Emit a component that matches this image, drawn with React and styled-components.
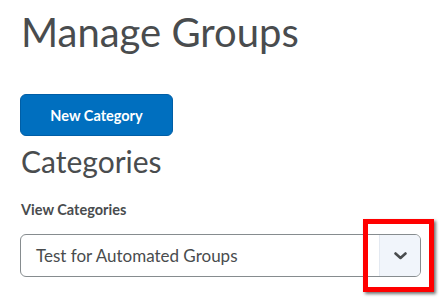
import React from 'react';
import styled, {createGlobalStyle} from 'styled-components';

const GlobalStyle = createGlobalStyle`
    html, body {
        margin: 0;
        padding: 0;
        background: #ffffff;
        font-family: Lato, "Noto Sans", sans-serif;
        color: #494c4e;
    }
`;

const Page = styled.main`
    min-height: 299px;
    box-sizing: border-box;
    padding: 8px 18px 0 20px;
    display: flex;
    flex-direction: column;
    align-items: flex-start;
`;

const Title = styled.h1`
    margin: 0;
    font-size: 40px;
    font-weight: 400;
    line-height: 48px;
    color: #494c4e;
    padding-left: 1px;
`;

const PrimaryButton = styled.button`
    margin-top: 38px;
    width: 153px;
    height: 42px;
    border: 1px solid #005ea6;
    border-radius: 6px;
    background: #006fbf;
    color: #ffffff;
    font-family: Lato, sans-serif;
    font-weight: 700;
    font-size: 14.5px;
    cursor: pointer;
`;

const SectionTitle = styled.h2`
    margin: 6px 0 0;
    font-size: 30px;
    font-weight: 400;
    line-height: 38px;
    color: #494c4e;
    padding-left: 1px;
`;

const Label = styled.label`
    margin-top: 20px;
    font-size: 14.5px;
    font-weight: 700;
    line-height: 19px;
    padding-left: 1px;
`;

const SelectWrap = styled.div`
    position: relative;
    margin-top: 15px;
    align-self: stretch;
`;

const Select = styled.div`
    display: flex;
    height: 43px;
    box-sizing: border-box;
    border: 1px solid #868c8f;
    border-radius: 6px;
    overflow: hidden;
`;

const SelectValue = styled.span`
    flex: 1;
    display: flex;
    align-items: center;
    padding-left: 15px;
    font-size: 17px;
    color: #494c4e;
`;

const SelectToggle = styled.span`
    width: 40px;
    display: flex;
    align-items: center;
    justify-content: center;
    background: #f1f5fb;
    border-left: 1px solid #e3e9f1;
`;

const Highlight = styled.div`
    position: absolute;
    right: -13px;
    top: -15px;
    width: 71px;
    height: 73px;
    box-sizing: border-box;
    border: 5px solid #ff0000;
    box-shadow: 2px 2px 3px rgba(0, 0, 0, 0.55);
    pointer-events: none;
`;

const Chevron = () => (
    <svg width="13" height="8" viewBox="0 0 13 8">
        <path d="M1.5 1.5 L6.5 6 L11.5 1.5" fill="none" stroke="#494c4e" strokeWidth="2.6" strokeLinecap="round" strokeLinejoin="round" />
    </svg>
);

export default function App() {
    return (
        <React.Fragment>
            <GlobalStyle />
            <Page>
                <Title>Manage Groups</Title>
                <PrimaryButton>New Category</PrimaryButton>
                <SectionTitle>Categories</SectionTitle>
                <Label>View Categories</Label>
                <SelectWrap>
                    <Select>
                        <SelectValue>Test for Automated Groups</SelectValue>
                        <SelectToggle><Chevron /></SelectToggle>
                    </Select>
                    <Highlight />
                </SelectWrap>
            </Page>
        </React.Fragment>
    );
}
